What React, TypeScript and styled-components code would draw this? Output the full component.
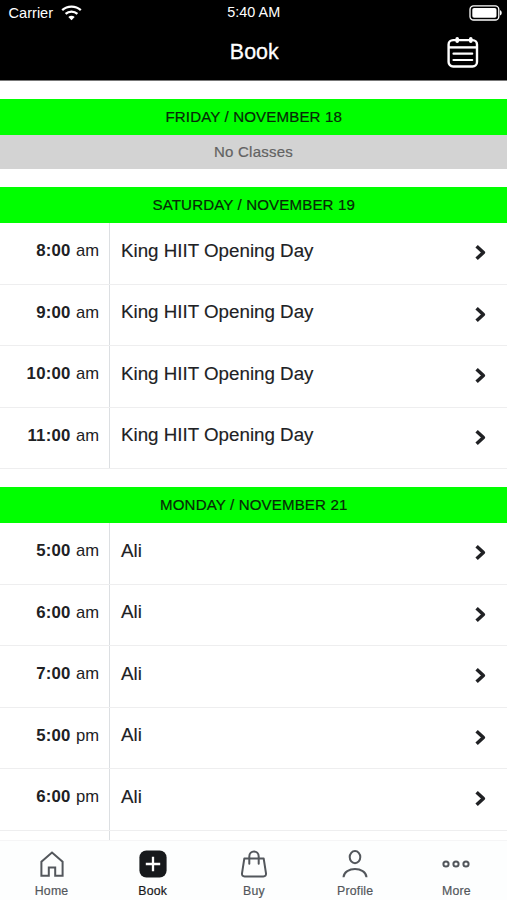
import React from "react";
import styled, { createGlobalStyle } from "styled-components";

const GlobalStyle = createGlobalStyle`
  * { box-sizing: border-box; }
  body { margin: 0; background: #fff; }
`;

const Screen = styled.div`
  width: 507px;
  height: 900px;
  display: flex;
  flex-direction: column;
  overflow: hidden;
  background: #fff;
  color: #202124;
  font-family: "Liberation Sans", Arial, sans-serif;
`;

const Header = styled.header`
  flex: none;
  height: 81px;
  background: #000;
  border-bottom: 1px solid #777;
  color: #fff;
`;

const StatusBar = styled.div`
  height: 24px;
  display: grid;
  grid-template-columns: 1fr auto 1fr;
  align-items: center;
  padding: 0 4px 0 8.5px;
  font-size: 14.6px;
  line-height: 22px;
`;

const Carrier = styled.div`
  display: flex;
  align-items: center;
  gap: 7.5px;
  padding-top: 2px;
`;

const Clock = styled.div`
  font-size: 14.4px;
  padding-right: 4px;
`;

const BatterySlot = styled.div`
  display: flex;
  justify-content: flex-end;
  padding-top: 2px;
`;

const TitleBar = styled.div`
  height: 56px;
  display: grid;
  grid-template-columns: 1fr auto 1fr;
  align-items: center;
  padding: 0 28.5px 0 30px;
`;

const Title = styled.h1`
  margin: 0;
  font-size: 21.4px;
  font-weight: 400;
  line-height: 26px;
  -webkit-text-stroke: 0.3px #fff;
`;

const CalendarButton = styled.button`
  grid-column: 3;
  justify-self: end;
  display: flex;
  padding: 0;
  border: 0;
  background: none;
  color: #fff;
`;

const Schedule = styled.main`
  flex: 1;
  min-height: 0;
  overflow: hidden;
  padding-top: 17.5px;
  display: flex;
  flex-direction: column;
  gap: 18px;
`;

const Day = styled.section`
  flex: none;
`;

const DayHeading = styled.h2`
  margin: 0;
  height: 36px;
  background: #00ff00;
  color: #072807;
  text-align: center;
  font-size: 15.1px;
  font-weight: 400;
  line-height: 35px;
  letter-spacing: 0.13px;
  padding-left: 0.5px;
  -webkit-text-stroke: 0.2px #072807;
`;

const EmptyNote = styled.p`
  margin: 0;
  height: 34.5px;
  background: #d3d3d3;
  color: #626262;
  text-align: center;
  font-size: 15px;
  line-height: 33px;
  letter-spacing: 0.25px;
  -webkit-text-stroke: 0.2px #626262;
`;

const ClassRow = styled.div`
  height: 61.5px;
  display: grid;
  grid-template-columns: 110px 1fr auto;
  border-bottom: 1px solid #eeeeef;
`;

const Time = styled.div`
  border-right: 1px solid #dcdfe2;
  padding: 17px 10px 0 0;
  text-align: right;
  font-size: 16.6px;
  line-height: 22px;
`;

const Hour = styled.strong`
  font-weight: 700;
  font-size: 16.8px;
  letter-spacing: 0.2px;
  margin-right: 0.8px;
`;

const ClassName = styled.div`
  padding: 16.5px 0 0 11px;
  font-size: 18.75px;
  line-height: 22px;
  -webkit-text-stroke: 0.15px #202124;
`;

const Chevron = styled.svg`
  margin: 21px 19px 0 0;
  fill: none;
  stroke: #202124;
  stroke-width: 3.5;
  stroke-linejoin: round;
`;

// The start of the row that continues beneath the tab bar.
const NextRow = styled.div`
  height: 61.5px;
  width: 110px;
  border-right: 1px solid #dcdfe2;
`;

const TabBar = styled.nav`
  flex: none;
  height: 60px;
  display: grid;
  grid-template-columns: repeat(5, 1fr);
  padding-left: 1px;
  border-top: 1px solid #f5f5f6;
  background: #fdfefe;
`;

const Tab = styled.button<{ $active?: boolean }>`
  display: flex;
  flex-direction: column;
  align-items: center;
  gap: 5px;
  padding: 8px 0 0;
  border: 0;
  background: none;
  color: ${(p) => (p.$active ? "#17191c" : "#53575c")};
  font-family: inherit;
  font-size: 12.3px;
  line-height: 15px;
  letter-spacing: 0.2px;
  -webkit-text-stroke: 0.2px currentColor;
`;

const TabIcon = styled.svg`
  flex: none;
  fill: none;
  stroke: currentColor;
  stroke-width: 2;
`;

const WifiIcon = () => (
  <svg width="21" height="16" viewBox="0 0 21 16" fill="none" stroke="#fff" strokeWidth="2.3">
    <path d="M1.2 5.2C6.4.4 14.6.4 19.8 5.2" />
    <path d="M4.6 8.8C7.9 5.8 13.1 5.8 16.4 8.8" />
    <path d="M7.3 12C9.2 10.2 11.8 10.2 13.7 12L10.5 15.2Z" fill="#fff" stroke="none" />
  </svg>
);

const BatteryIcon = () => (
  <svg width="34" height="16" viewBox="0 0 34 16">
    <rect x="1" y="0.8" width="28.8" height="14.2" rx="3.6" fill="none" stroke="#fff" strokeWidth="1.3" />
    <rect x="3.3" y="3" width="24.2" height="9.8" rx="1.8" fill="#fff" />
    <path d="M31 5.3C33.3 5.8 33.3 10 31 10.5Z" fill="#fff" />
  </svg>
);

const CalendarIcon = () => (
  <svg width="33" height="32" viewBox="0 0 33 32" fill="none" stroke="currentColor" strokeWidth="2.4">
    <rect x="2.6" y="4.1" width="28.4" height="26.4" rx="4.5" />
    <path d="M2.6 11.4H31" />
    <path d="M7.5 17.7H26.2M7.5 24H26.2" strokeWidth="2.2" strokeLinecap="round" />
    <path d="M11.2 2.8V5.2M24.8 2.8V5.2" strokeWidth="3.6" strokeLinecap="round" />
  </svg>
);

const HomeIcon = () => (
  <TabIcon width="30" height="30" viewBox="0 0 30 30">
    <path d="M4.4 26.8V12.7L15 3.5 25.6 12.7V26.8H18.2V18.4H11.8V26.8Z" />
  </TabIcon>
);

const BookIcon = () => (
  <TabIcon width="30" height="30" viewBox="0 0 30 30">
    <rect x="1.4" y="1.4" width="27.2" height="27.2" rx="7" fill="currentColor" stroke="none" />
    <path d="M15 7.8V22.2M7.8 15H22.2" stroke="#fff" strokeWidth="2.3" />
  </TabIcon>
);

const BuyIcon = () => (
  <TabIcon width="30" height="30" viewBox="0 0 30 30">
    <path d="M5.3 9.6H24.7L27 24.3Q27.3 27.4 24.4 27.4H5.6Q2.7 27.4 3 24.3Z" strokeLinejoin="round" />
    <path d="M10.3 14.8V7.5C10.3.8 19.7.8 19.7 7.5V14.8" strokeLinecap="round" />
  </TabIcon>
);

const ProfileIcon = () => (
  <TabIcon width="30" height="30" viewBox="0 0 30 30">
    <ellipse cx="15" cy="8.1" rx="5.3" ry="6.1" />
    <path d="M3.5 28.2C4.2 17.4 25.8 17.4 26.5 28.2" />
  </TabIcon>
);

const MoreIcon = () => (
  <TabIcon width="30" height="30" viewBox="0 0 30 30">
    <circle cx="5" cy="15" r="2.6" />
    <circle cx="15" cy="15" r="2.6" />
    <circle cx="25" cy="15" r="2.6" />
  </TabIcon>
);

const makeClasses = (name: string, times: string[]) => times.map((time) => ({ time, name }));

const days = [
  { title: "FRIDAY / NOVEMBER 18", classes: [] as { time: string; name: string }[] },
  {
    title: "SATURDAY / NOVEMBER 19",
    classes: makeClasses("King HIIT Opening Day", ["8:00 am", "9:00 am", "10:00 am", "11:00 am"]),
  },
  {
    title: "MONDAY / NOVEMBER 21",
    classes: makeClasses("Ali", ["5:00 am", "6:00 am", "7:00 am", "5:00 pm", "6:00 pm"]),
  },
];

const tabs = [
  { label: "Home", Icon: HomeIcon },
  { label: "Book", Icon: BookIcon, active: true },
  { label: "Buy", Icon: BuyIcon },
  { label: "Profile", Icon: ProfileIcon },
  { label: "More", Icon: MoreIcon },
];

export default function App() {
  return (
    <Screen>
      <GlobalStyle />
      <Header>
        <StatusBar>
          <Carrier>
            Carrier
            <WifiIcon />
          </Carrier>
          <Clock>5:40 AM</Clock>
          <BatterySlot>
            <BatteryIcon />
          </BatterySlot>
        </StatusBar>
        <TitleBar>
          <span />
          <Title>Book</Title>
          <CalendarButton aria-label="Calendar">
            <CalendarIcon />
          </CalendarButton>
        </TitleBar>
      </Header>
      <Schedule>
        {days.map((day, index) => (
          <Day key={day.title}>
            <DayHeading>{day.title}</DayHeading>
            {day.classes.length === 0 && <EmptyNote>No Classes</EmptyNote>}
            {day.classes.map(({ time, name }) => {
              const [hour, period] = time.split(" ");
              return (
                <ClassRow key={time}>
                  <Time>
                    <Hour>{hour}</Hour> {period}
                  </Time>
                  <ClassName>{name}</ClassName>
                  <Chevron width="14" height="17" viewBox="0 0 14 17">
                    <path d="M2.6 2.2 9.4 8.5 2.6 14.8" />
                  </Chevron>
                </ClassRow>
              );
            })}
            {index === days.length - 1 && <NextRow />}
          </Day>
        ))}
      </Schedule>
      <TabBar>
        {tabs.map(({ label, Icon, active }) => (
          <Tab key={label} $active={active}>
            <Icon />
            {label}
          </Tab>
        ))}
      </TabBar>
    </Screen>
  );
}
